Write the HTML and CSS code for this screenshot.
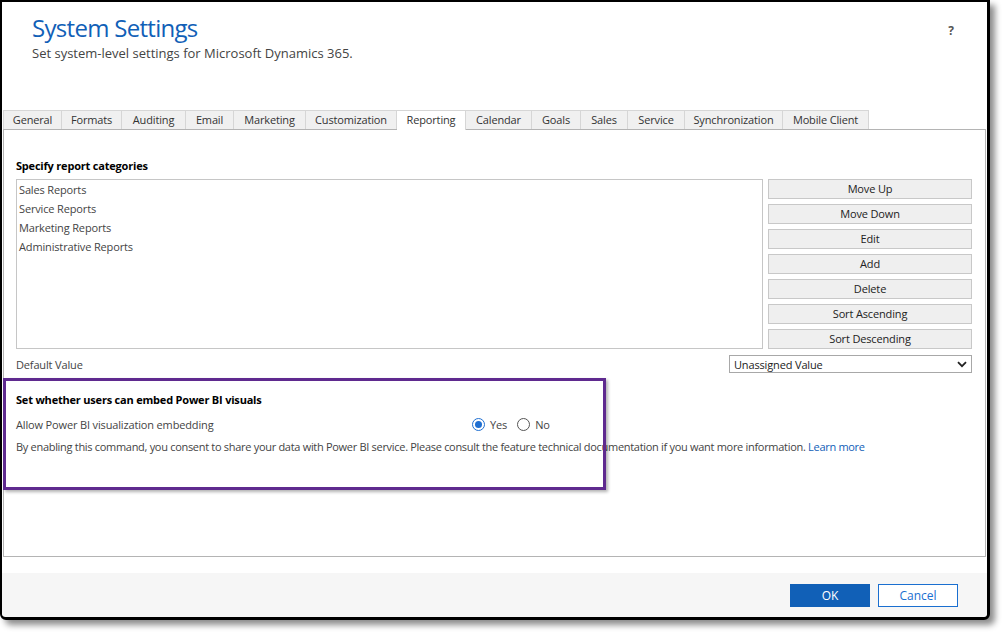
FILE: index.html
```html
<!DOCTYPE html>
<html lang="en">
<head>
    <meta charset="UTF-8">
    <title>System Settings</title>
    <link rel="stylesheet" href="styles.css">
</head>
<body>
    <div class="window">
        <div class="header">
            <div class="header-text">
                <h1>System Settings</h1>
                <p>Set system-level settings for Microsoft Dynamics 365.</p>
            </div>
            <span class="help">?</span>
        </div>

        <!-- tabs -->
        <div class="tabs">
            <div class="tab" style="width: 59px">General</div>
            <div class="tab" style="width: 60px">Formats</div>
            <div class="tab" style="width: 64px">Auditing</div>
            <div class="tab" style="width: 48px">Email</div>
            <div class="tab" style="width: 72px">Marketing</div>
            <div class="tab" style="width: 91px">Customization</div>
            <div class="tab active" style="width: 69px">Reporting</div>
            <div class="tab" style="width: 66px">Calendar</div>
            <div class="tab" style="width: 49px">Goals</div>
            <div class="tab" style="width: 47px">Sales</div>
            <div class="tab" style="width: 57px">Service</div>
            <div class="tab" style="width: 98px">Synchronization</div>
            <div class="tab" style="width: 86px">Mobile Client</div>
        </div>

        <div class="panel">
            <h2>Specify report categories</h2>
            <div class="categories">
                <div class="listbox">
                    <div class="list-item">Sales Reports</div>
                    <div class="list-item">Service Reports</div>
                    <div class="list-item">Marketing Reports</div>
                    <div class="list-item">Administrative Reports</div>
                </div>
                <div class="list-buttons">
                    <button class="btn">Move Up</button>
                    <button class="btn">Move Down</button>
                    <button class="btn">Edit</button>
                    <button class="btn">Add</button>
                    <button class="btn">Delete</button>
                    <button class="btn">Sort Ascending</button>
                    <button class="btn">Sort Descending</button>
                </div>
            </div>

            <div class="default-row">
                <span class="label">Default Value</span>
                <div class="select">
                    <span>Unassigned Value</span>
                    <svg width="10" height="7" viewBox="0 0 10 7"><path d="M1 1.2 L5 5.2 L9 1.2" fill="none" stroke="#222" stroke-width="1.8"/></svg>
                </div>
            </div>

            <h2 class="powerbi-title">Set whether users can embed Power BI visuals</h2>
            <div class="option-row">
                <span class="label">Allow Power BI visualization embedding</span>
                <label class="radio"><span class="dot checked"></span>Yes</label>
                <label class="radio"><span class="dot"></span>No</label>
            </div>
            <p class="note">By enabling this command, you consent to share your data with Power BI service. Please consult the feature technical documentation if you want more information. <a href="#">Learn more</a></p>
        </div>

        <div class="footer">
            <button class="btn-primary">OK</button>
            <button class="btn-outline">Cancel</button>
        </div>

        <!-- annotation -->
        <div class="highlight"></div>
    </div>
</body>
</html>
```

FILE: styles.css
```css
* {
    margin: 0;
    padding: 0;
    box-sizing: border-box;
}

body {
    font-family: 'Open Sans', 'Noto Sans', sans-serif;
    background: #ffffff;
    color: #444444;
    width: 1005px;
    height: 635px;
    overflow: hidden;
}

.window {
    position: relative;
    width: 990px;
    height: 620px;
    background: #ffffff;
    border-style: solid;
    border-color: #000000;
    border-width: 2px 3px 3px 2px;
    border-radius: 0 0 6px 6px;
    box-shadow: 5px 5px 6px rgba(0, 0, 0, 0.45);
    display: flex;
    flex-direction: column;
}

.header {
    height: 108px;
    padding: 10px 33px 0 30px;
    display: flex;
    justify-content: space-between;
    align-items: flex-start;
}

.header h1 {
    font-size: 24px;
    font-weight: 400;
    color: #1160b7;
    line-height: 32px;
    letter-spacing: -0.7px;
}

.header p {
    font-size: 13px;
    color: #444444;
    line-height: 18px;
}

.help {
    font-size: 12px;
    font-weight: 700;
    color: #555555;
    margin-top: 10px;
}

.tabs {
    display: flex;
    height: 19px;
    padding-left: 1px;
}

.tab {
    height: 19px;
    background: #f0f0f0;
    border: 1px solid #d6d6d6;
    border-left: none;
    border-bottom: none;
    font-size: 11px;
    letter-spacing: -0.15px;
    line-height: 18px;
    text-align: center;
    color: #333333;
    white-space: nowrap;
}

.tab:first-child {
    border-left: 1px solid #d6d6d6;
}

.tab.active {
    background: #ffffff;
    position: relative;
    z-index: 1;
    height: 20px;
}

.panel {
    height: 428px;
    margin: 0 1px 0 1px;
    border: 1px solid #b4b4b4;
    padding: 28px 13px 0 12px;
}

.panel h2 {
    font-size: 11px;
    font-weight: 700;
    letter-spacing: -0.2px;
    color: #000000;
    line-height: 16px;
    margin-bottom: 5px;
}

.categories {
    display: grid;
    grid-template-columns: 747px 204px;
    gap: 5px;
}

.listbox {
    height: 170px;
    border: 1px solid #c6c6c6;
    padding: 0 2px;
}

.list-item {
    font-size: 11px;
    letter-spacing: -0.15px;
    line-height: 19px;
    color: #444444;
}

.list-buttons {
    display: flex;
    flex-direction: column;
    gap: 5px;
}

.btn {
    height: 20px;
    background: #efefef;
    border: 1px solid #c8c8c8;
    font-family: inherit;
    font-size: 11px;
    letter-spacing: -0.15px;
    color: #222222;
    padding-bottom: 1px;
}

.default-row {
    display: flex;
    justify-content: space-between;
    align-items: center;
    margin-top: 6px;
    height: 18px;
}

.label {
    font-size: 11px;
    letter-spacing: -0.15px;
    color: #444444;
}

.select {
    width: 243px;
    height: 18px;
    border: 1px solid #a8a8a8;
    display: flex;
    justify-content: space-between;
    align-items: center;
    padding: 0 4px 0 4px;
    font-size: 11px;
    letter-spacing: -0.15px;
    color: #222222;
}

.panel .powerbi-title {
    margin-top: 19px;
    margin-bottom: 0;
}

.option-row {
    display: flex;
    align-items: center;
    margin-top: 8px;
    height: 16px;
}

.option-row .label {
    width: 456px;
}

.radio {
    display: flex;
    align-items: center;
    gap: 5px;
    font-size: 11px;
    letter-spacing: -0.15px;
    color: #444444;
    margin-right: 10px;
}

.dot {
    width: 13px;
    height: 13px;
    border: 1px solid #555555;
    border-radius: 50%;
    display: flex;
    align-items: center;
    justify-content: center;
}

.dot.checked {
    border-color: #1f6fd1;
}

.dot.checked::after {
    content: "";
    width: 7px;
    height: 7px;
    border-radius: 50%;
    background: #1f6fd1;
}

.note {
    font-size: 11px;
    letter-spacing: -0.3px;
    line-height: 16px;
    color: #444444;
    margin-top: 7px;
    white-space: nowrap;
}

.note a {
    color: #1160b7;
    text-decoration: none;
}

.footer {
    margin-top: 16px;
    flex: 1;
    background: #f6f6f6;
    border-radius: 0 0 5px 5px;
    display: flex;
    justify-content: flex-end;
    gap: 8px;
    padding: 11px 29px 0 0;
}

.btn-primary,
.btn-outline {
    width: 80px;
    height: 23px;
    font-family: inherit;
    font-size: 12px;
}

.btn-primary {
    background: #1160b7;
    border: 1px solid #1160b7;
    color: #ffffff;
}

.btn-outline {
    background: #ffffff;
    border: 1px solid #1a6fd0;
    color: #1a6fd0;
}

.highlight {
    position: absolute;
    left: 1px;
    top: 376px;
    width: 603px;
    height: 112px;
    border: 3px solid #5f2a8f;
    box-shadow: 2px 2px 3px rgba(0, 0, 0, 0.3);
    pointer-events: none;
}
```
